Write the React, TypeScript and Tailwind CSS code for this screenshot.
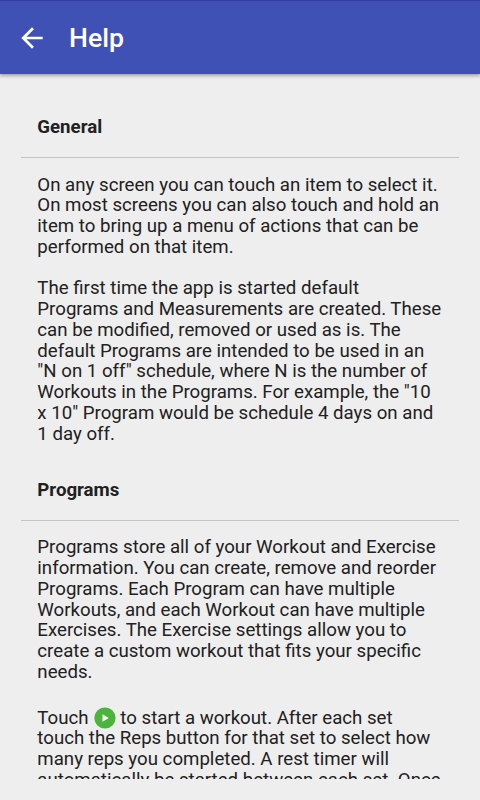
const general = [
  'On any screen you can touch an item to select it.',
  'On most screens you can also touch and hold an',
  'item to bring up a menu of actions that can be',
  'performed on that item.',
  '',
  'The first time the app is started default',
  'Programs and Measurements are created. These',
  'can be modified, removed or used as is. The',
  'default Programs are intended to be used in an',
  '"N on 1 off" schedule, where N is the number of',
  'Workouts in the Programs. For example, the "10',
  'x 10" Program would be schedule 4 days on and',
  '1 day off.',
];

const programs = [
  'Programs store all of your Workout and Exercise',
  'information. You can create, remove and reorder',
  'Programs. Each Program can have multiple',
  'Workouts, and each Workout can have multiple',
  'Exercises. The Exercise settings allow you to',
  'create a custom workout that fits your specific',
  'needs.',
];

function Lines({ lines }: { lines: string[] }) {
  return (
    <>
      {lines.map((line, i) => (
        <div key={i} className="h-[20.75px] whitespace-nowrap">
          {line}
        </div>
      ))}
    </>
  );
}

function PlayIcon() {
  return (
    <svg viewBox="0 0 22 22" className="size-[22px]">
      <circle cx="11" cy="11" r="10.6" fill="#4cb43c" />
      <path d="M8.5 7.2v7.6l6.2-3.8z" fill="#fff" />
    </svg>
  );
}

export default function App() {
  return (
    <div className="flex h-[800px] w-[480px] flex-col overflow-hidden bg-[#eeeeee] font-[Roboto,sans-serif] text-[18.67px] leading-[20.75px] text-[#212121]">
      <header className="z-10 flex h-[74px] shrink-0 items-center border-t border-[#303f9f] bg-[#3f51b5] text-white shadow-[0_2px_3px_rgba(0,0,0,0.3)]">
        <svg viewBox="0 0 24 24" className="ml-4 size-8" fill="#fff">
          <path d="M20 11H7.83l5.59-5.59L12 4l-8 8 8 8 1.41-1.41L7.83 13H20v-2z" />
        </svg>
        <h1 className="ml-[21px] text-[26.67px] font-medium leading-8">Help</h1>
      </header>
      <main className="h-[705px] overflow-hidden px-[21px]">
        <h2 className="px-[16.33px] pt-[42.75px] font-bold">General</h2>
        <div className="mt-[19.5px] h-px bg-[#c4c4c4]" />
        <div className="px-[16.33px] pt-[16.6px]">
          <Lines lines={general} />
        </div>
        <h2 className="px-[16.33px] pt-[35.4px] font-bold">Programs</h2>
        <div className="mt-[19.5px] h-px bg-[#c4c4c4]" />
        <div className="px-[16.33px] pt-[16.5px]">
          <Lines lines={programs} />
          <div className="mt-[25px] flex h-[20.75px] items-center whitespace-nowrap">
            <span className="mr-[5.4px]">Touch</span>
            <PlayIcon />
            <span className="ml-[4.4px]">to start a workout. After each set</span>
          </div>
          <Lines
            lines={[
              'touch the Reps button for that set to select how',
              'many reps you completed. A rest timer will',
              'automatically be started between each set. Once',
            ]}
          />
        </div>
      </main>
    </div>
  );
}
